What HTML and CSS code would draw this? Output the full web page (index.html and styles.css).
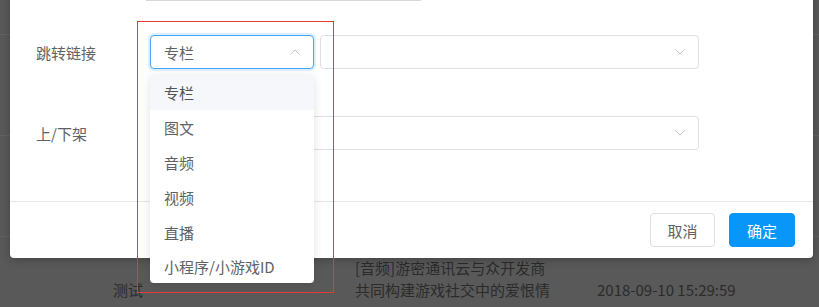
FILE: index.html
```html
<!DOCTYPE html>
<html lang="zh">
<head>
<meta charset="utf-8">
<link rel="stylesheet" href="styles.css">
</head>
<body>
<div class="page">
  <div class="table">
    <div class="row"></div>
    <div class="row"></div>
    <div class="row"></div>
    <div class="row data">
      <div class="cell c1">测试</div>
      <div class="cell c2">[音频]游密通讯云与众开发商<br>共同构建游戏社交中的爱恨情</div>
      <div class="cell c3">2018-09-10 15:29:59</div>
    </div>
  </div>
</div>

<div class="modal">
  <div class="prev-field"></div>
  <div class="form-row first">
    <label class="label">跳转链接</label>
    <div class="select focus small">
      <span class="value">专栏</span>
      <svg class="arrow" width="10" height="6" viewBox="0 0 10 6"><path d="M0.5 5.5 L5 1 L9.5 5.5" fill="none" stroke="#c0c4cc" stroke-width="1"/></svg>
    </div>
    <div class="select wide">
      <span class="value"></span>
      <svg class="arrow" width="10" height="6" viewBox="0 0 10 6"><path d="M0.5 0.5 L5 5 L9.5 0.5" fill="none" stroke="#c0c4cc" stroke-width="1"/></svg>
    </div>
  </div>
  <div class="form-row second">
    <label class="label">上/下架</label>
    <div class="select full">
      <span class="value"></span>
      <svg class="arrow" width="10" height="6" viewBox="0 0 10 6"><path d="M0.5 0.5 L5 5 L9.5 0.5" fill="none" stroke="#c0c4cc" stroke-width="1"/></svg>
    </div>
  </div>
  <div class="footer">
    <button class="btn">取消</button>
    <button class="btn primary">确定</button>
  </div>
</div>

<ul class="dropdown">
  <li class="item hover">专栏</li>
  <li class="item">图文</li>
  <li class="item">音频</li>
  <li class="item">视频</li>
  <li class="item">直播</li>
  <li class="item">小程序/小游戏ID</li>
</ul>

<div class="annotation"></div>
</body>
</html>
```

FILE: styles.css
```css
* { box-sizing: border-box; }

html, body {
  margin: 0;
  padding: 0;
  width: 819px;
  height: 307px;
  overflow: hidden;
}

body {
  background: #595959;
  font-family: "Noto Sans CJK SC", "Microsoft YaHei", sans-serif;
  font-size: 15px;
  color: #606266;
  position: relative;
}

.page { width: 819px; height: 307px; }

.table { display: flex; flex-direction: column; }

.row {
  height: 101px;
  border-bottom: 1px solid #636363;
}
.row:first-child { height: 35px; }

.row.data {
  display: grid;
  grid-template-columns: 355px 242px 1fr;
  align-items: start;
  padding-top: 20px;
  height: 70px;
  border-bottom: none;
  color: #2b2b2b;
  line-height: 22px;
}
.c1 { padding-left: 113px; padding-top: 22px; }
.c3 { padding-top: 22px; }

.modal {
  position: absolute;
  left: 10px;
  top: -20px;
  width: 803px;
  background: #fff;
  border-radius: 4px;
  box-shadow: 0 2px 10px rgba(0,0,0,0.25);
  padding-left: 26px;
}

.prev-field {
  margin-left: 110px;
  width: 275px;
  height: 21px;
  border-bottom: 1px solid #d6d8dc;
}

.form-row {
  display: flex;
  align-items: center;
  height: 34px;
}
.form-row.first { margin-top: 34px; }
.form-row.second { margin-top: 47px; }

.label {
  width: 114px;
  color: #606266;
  font-size: 15px;
}

.select {
  position: relative;
  height: 34px;
  border: 1px solid #dcdfe6;
  border-radius: 4px;
  display: flex;
  align-items: center;
  padding-left: 13px;
  background: #fff;
}
.select .value { color: #606266; }
.select .arrow {
  position: absolute;
  right: 13px;
  top: 13px;
}
.select.small { width: 164px; }
.select.wide { width: 379px; margin-left: 6px; }
.select.full { width: 549px; }

.select.focus {
  border-color: #46a6ff;
  box-shadow: 0 0 0 2px rgba(64,160,255,0.18);
}

.footer {
  margin-top: 51px;
  margin-left: -26px;
  border-top: 1px solid #e6e6e6;
  display: flex;
  justify-content: flex-end;
  gap: 14px;
  padding: 11px 18px 11px 0;
}

.btn {
  height: 34px;
  border: 1px solid #dcdfe6;
  border-radius: 4px;
  background: #fff;
  color: #606266;
  font-family: inherit;
  font-size: 15px;
  padding: 0;
  width: 65px;
}
.btn.primary {
  width: 66px;
  background: #0897f8;
  border-color: #0897f8;
  color: #fff;
}

.dropdown {
  position: absolute;
  left: 150px;
  top: 75px;
  width: 164px;
  margin: 0;
  padding: 0;
  list-style: none;
  background: #fff;
  border-radius: 4px;
  box-shadow: 0 2px 10px rgba(0,0,0,0.12);
  overflow: hidden;
}
.item {
  height: 35px;
  line-height: 35px;
  padding-left: 14px;
  color: #606266;
}
.item.hover {
  background: #f5f7fa;
  color: #505255;
}
.item:last-child { height: 33px; line-height: 33px; }

.annotation {
  position: absolute;
  left: 137px;
  top: 21px;
  width: 197px;
  height: 272px;
  border: 1px solid #e63a3a;
  pointer-events: none;
}
```
